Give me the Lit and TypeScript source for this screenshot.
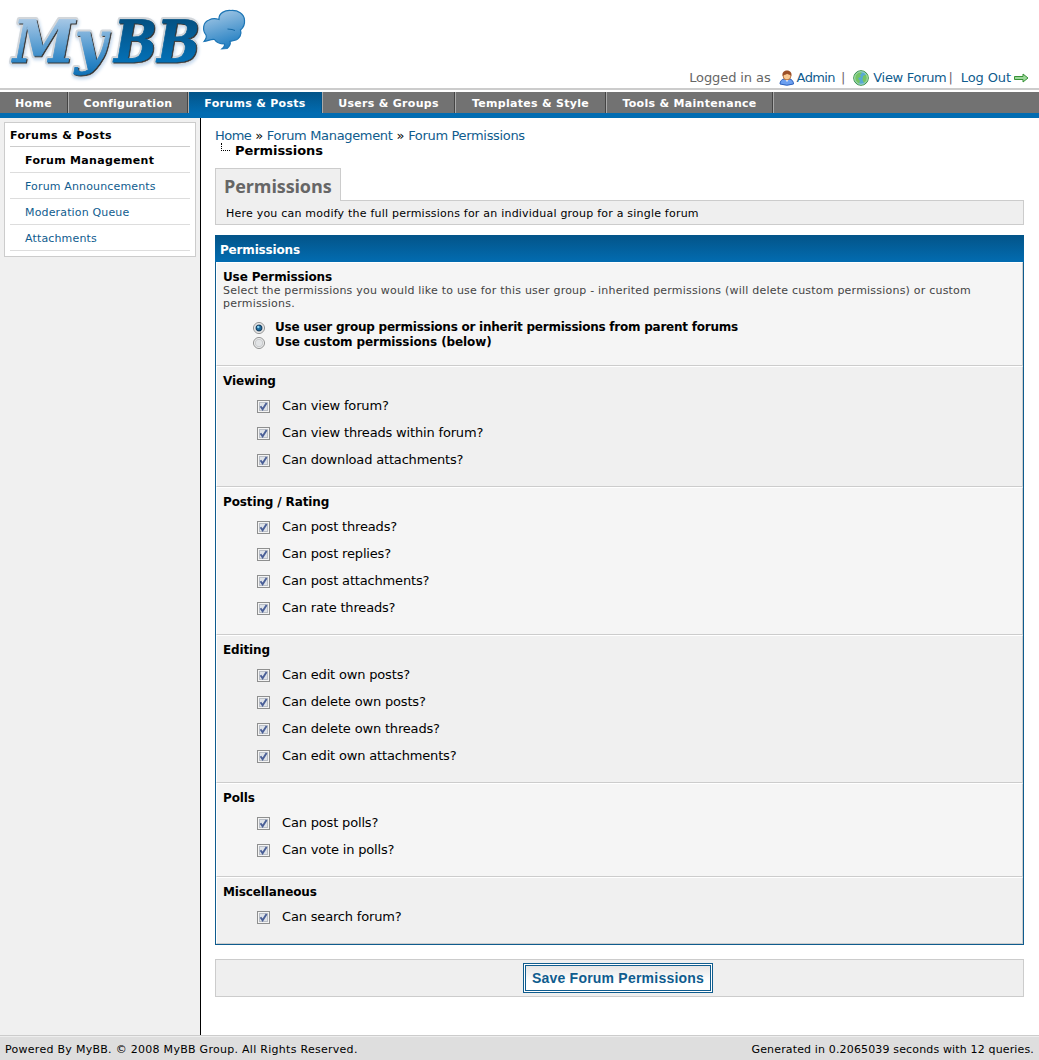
import { LitElement, html, svg, css } from "lit";
import { customElement } from "lit/decorators.js";

const TABS = [
  { label: "Home", width: 68 },
  { label: "Configuration", width: 120 },
  { label: "Forums & Posts", width: 134, active: true },
  { label: "Users & Groups", width: 133 },
  { label: "Templates & Style", width: 151 },
  { label: "Tools & Maintenance", width: 167 },
];

const SIDE = ["Forum Management", "Forum Announcements", "Moderation Queue", "Attachments"];

const GROUPS = [
  { title: "Viewing", items: ["Can view forum?", "Can view threads within forum?", "Can download attachments?"] },
  { title: "Posting / Rating", items: ["Can post threads?", "Can post replies?", "Can post attachments?", "Can rate threads?"] },
  { title: "Editing", items: ["Can edit own posts?", "Can delete own posts?", "Can delete own threads?", "Can edit own attachments?"] },
  { title: "Polls", items: ["Can post polls?", "Can vote in polls?"] },
  { title: "Miscellaneous", items: ["Can search forum?"] },
];

const layer = (cls: string) => svg`
  <g class=${cls}>
    <text x="13" y="62" font-size="58" textLength="94" lengthAdjust="spacingAndGlyphs" class="my">My</text>
    <text x="114" y="62" font-size="58" textLength="86" lengthAdjust="spacingAndGlyphs" class="bb">BB</text>
  </g>`;

const logo = html`
  <svg class="logo" width="260" height="84" viewBox="0 0 260 84" role="img" aria-label="MyBB">
    <defs>
      <linearGradient id="my" gradientUnits="userSpaceOnUse" x1="0" y1="18" x2="0" y2="76">
        <stop offset="0" stop-color="#a9c9e6" /><stop offset=".75" stop-color="#2f86c6" /><stop offset="1" stop-color="#0d70b6" />
      </linearGradient>
      <linearGradient id="bb" gradientUnits="userSpaceOnUse" x1="0" y1="18" x2="0" y2="62">
        <stop offset="0" stop-color="#045081" /><stop offset="1" stop-color="#0470b6" />
      </linearGradient>
      <linearGradient id="bub" gradientUnits="userSpaceOnUse" x1="218" y1="9" x2="230" y2="48">
        <stop offset="0" stop-color="#a6c9e6" /><stop offset="1" stop-color="#1c7bc0" />
      </linearGradient>
    </defs>
    ${layer("halo")} ${layer("shade")} ${layer("face")}
    <path class="bubble" d="M219 19.500C218.500 13 225 10 231 10.500C238 10 244 14 244.500 20C245 25 243 28 240.500 30C242 34 240 39 234 40.500L230 41.500C231 44 230 46 227 48.500L222 48.800C224 47 225 45.500 224.500 44C219 44 216 42 214.500 39.500C211 39 208 41 204 41.500C206 39 207 37 206 35C202 30 203 22 209 20C212 18.500 216 18.500 219 19.500Z" />
    <path class="mark" d="M227.500 29L232 29.500L235 30.500" />
  </svg>`;

const userIcon = html`
  <svg width="16" height="16" viewBox="0 0 16 16">
    <path d="M1 14C1 11 3 9 5.500 9h4.500c3 0 4.500 2.500 4.500 5Q8 16.500 1 14Z" fill="#6b9ff0" stroke="#2d61bd" />
    <path d="M6 9l2 3 2-3z" fill="#fff" />
    <circle cx="8" cy="6" r="3.900" fill="#fac993" stroke="#a65a25" stroke-width=".8" />
    <path d="M3.500 6C3 2 5.500.6 8 .6s5 1.400 4.500 5.400C11.500 4.500 9 4.800 8 3.800 7 5 5 4.500 3.500 6Z" fill="#9c4f27" />
  </svg>`;

const worldIcon = html`
  <svg width="16" height="16" viewBox="0 0 16 16">
    <circle cx="8" cy="8" r="7.300" fill="#58a9d4" stroke="#3d9440" />
    <path d="M2 5Q4 2 7 1.500L9 3 7 5 8 7 5 8 7 11 6 14Q1.500 12 1.400 8ZM10 6l4-2Q16 8 13.500 12L11 13 9.500 10Z" fill="#74c565" />
    <circle cx="8" cy="8" r="6.300" fill="none" stroke="#bde5c0" stroke-width=".8" />
  </svg>`;

const arrowIcon = html`
  <svg class="arrow" width="15" height="10" viewBox="0 0 15 10">
    <path d="M.5 3.500h8.500V1l5 4-5 4V6.500H.5Z" fill="#9dd79a" stroke="#379237" />
  </svg>`;

const check = html`
  <svg class="check" width="13" height="13" viewBox="0 0 13 13" role="img" aria-label="checked">
    <rect x=".5" y=".5" width="12" height="12" fill="#f4f4f4" stroke="#8e8f8f" />
    <rect x="2.500" y="2.500" width="8" height="8" fill="#dfe3e8" stroke="#b9bec6" />
    <path d="M3.500 6.300L5.600 9.300 9.600 3" fill="none" stroke="#4a5f97" stroke-width="1.900" />
  </svg>`;

const radio = (on: boolean) => html`
  <svg class="radio" width="12" height="12" viewBox="0 0 12 12" role="img" aria-label=${on ? "selected" : "not selected"}>
    <circle cx="6" cy="6" r="5.500" fill="#f6f6f6" stroke="#8e8f8f" />
    <circle cx="6" cy="6" r="3.800" fill="#e2e4e6" stroke="#c6c8ca" />
    ${on ? svg`<circle cx="6" cy="6" r="2.900" fill="#1d6a9c" stroke="#123a5c" /><circle cx="5.300" cy="5" r="1.200" fill="#8bd4f4" />` : ""}
  </svg>`;

@customElement("app-root")
export class AppRoot extends LitElement {
  static styles = css`
    :host { display: flex; flex-direction: column; height: 1060px; overflow: hidden; background: #fff; color: #000;
      font-family: Verdana, "DejaVu Sans", sans-serif; font-size: 13px; line-height: 15px; white-space: nowrap; }
    * { box-sizing: border-box; }
    svg { display: block; flex: none; }
    a { color: #0f5c8e; text-decoration: none; }
    .header { height: 90px; flex: none; display: flex; justify-content: space-between; align-items: flex-start; border-bottom: 2px solid #ccc; }
    .logo text { font-family: "DejaVu Serif", serif; font-weight: bold; font-style: italic; }
    .halo { fill: #d2d6da; stroke: #d2d6da; stroke-width: 5; stroke-linejoin: round; filter: drop-shadow(1px 2px 1.500px #c9dcf0); }
    .shade { fill: #333; stroke: #333; stroke-width: 0.8; transform: translate(1px, 1px); }
    .face { stroke-width: 0.8; }
    .face .my { fill: url(#my); stroke: url(#my); }
    .face .bb { fill: url(#bb); stroke: url(#bb); }
    .bubble { fill: url(#bub); stroke: #1c75b5; stroke-width: 1.200; }
    .mark { fill: none; stroke: #1469a6; }
    .welcome { display: flex; align-items: center; color: #666; padding: 69px 10px 0 0; height: 86px; letter-spacing: -0.1px; }
    .who { margin-right: 8px; }
    .user { margin-right: 2px; }
    .world { margin-right: 4px; }
    .w-admin { letter-spacing: -0.6px; margin-right: 6px; }
    .w-view { letter-spacing: -0.3px; margin-right: 2px; }
    .w-out { margin-right: 3px; }
    .bar { margin-right: 8px; color: #72656f; }
    .menu { height: 26px; flex: none; margin-top: 2px; display: flex; background: #727272; border-bottom: 5px solid #026cb1; }
    .tab { display: flex; align-items: center; justify-content: center; color: #fff; font-size: 11px; font-weight: bold; height: 21px;
      border-left: 1px solid #aaa; border-right: 1px solid #444; letter-spacing: 0.3px; padding-top: 1px; }
    .tab:first-child { border-left: 0; }
    .tab.active { background: linear-gradient(#035488, #026cb1); border-right-color: #035488; }
    .tab.last-edge { width: 1px; padding: 0; border-right: 0; }
    .body { display: flex; flex: 1; min-height: 0; }
    .side { width: 201px; background: #f0f0f0; border-right: 1px solid #000; padding: 4px; flex: none; font-size: 11px; }
    .box { width: 192px; height: 135px; border: 1px solid #ccc; background: #fff; padding: 0 5px; }
    .box-title { font-weight: bold; height: 24px; line-height: 25px; border-bottom: 1px solid #ccc; letter-spacing: 0.35px; }
    .side-item { display: block; height: 26px; line-height: 28px; border-bottom: 1px solid #ddd; padding-left: 15px; letter-spacing: 0.15px; }
    .side-item.on { color: #000; font-weight: bold; letter-spacing: 0.32px; }
    .main { flex: 1; min-width: 0; padding: 10px 15px 0 14px; }
    .crumb { display: flex; gap: 4px; letter-spacing: -0.33px; }
    .crumb a:first-child { letter-spacing: -0.55px; }
    .crumb-now { display: flex; font-weight: bold; letter-spacing: -0.07px; }
    .elbow { width: 9px; height: 8px; margin: 0 5px 0 6px; border-left: 1px dotted #000; border-bottom: 1px dotted #000; }
    .intro { margin-top: 10px; height: 57px; display: flex; flex-direction: column; }
    .intro-tab { width: 126px; height: 33px; border: 1px solid #ccc; border-bottom: 0; background: #efefef; color: #666;
      font: bold 18px/34px "Open Sans", sans-serif; padding-left: 8px; letter-spacing: -0.1px; margin-bottom: -1px; z-index: 1; }
    .intro-text { border: 1px solid #ccc; background: #efefef; height: 25px; line-height: 25px; font-size: 11px; padding-left: 10px; letter-spacing: 0.215px; }
    .table { margin-top: 10px; border: 1px solid #0f5c8e; border-top: 0; }
    .thead { height: 27px; margin: 0 -1px; line-height: 30px; padding-left: 5px; color: #fff; font-weight: bold; font-size: 12px; letter-spacing: -0.17px;
      background: linear-gradient(#035488, #026cb1); }
    .row { border: 1px solid; border-color: #fff #ccc #ccc #fff; background: #f5f5f5; padding: 7px 6px 11px 6px; }
    .row.alt { background: #f0f0f0; }
    .first { height: 104px; }
    .label { font-weight: bold; font-size: 12px; line-height: 14px; letter-spacing: -0.13px; }
    .desc { font-size: 11px; line-height: 13px; color: #444; white-space: normal; letter-spacing: 0.215px; }
    .radios { padding: 10px 0 0 30px; font-weight: bold; font-size: 12px; letter-spacing: -0.24px; }
    .radio-line { display: flex; align-items: center; gap: 10px; }
    .radio-line + .radio-line { letter-spacing: -0.1px; }
    .radio { margin: 0; }
    .items { padding: 4px 0 2px 34px; letter-spacing: -0.17px; }
    .item { height: 27px; display: flex; align-items: center; gap: 12px; }
    .check { margin-top: 1px; }
    .buttons { margin-top: 14px; height: 38px; border: 1px solid #ccc; background: #efefef; display: flex; align-items: center; justify-content: center; padding-right: 3px; }
    .save { width: 190px; height: 30px; border: 3px double #0f5c8e; background: linear-gradient(#e6e6e6, #fff 65%) padding-box, #fff; color: #0f5c8e;
      font: bold 14px/24px "Liberation Sans", sans-serif; padding: 0; letter-spacing: 0.22px; }
    .footer { height: 25px; flex: none; background: #dedede; border-top: 1px solid #ccc; box-shadow: inset 0 1px #eee; display: flex; justify-content: space-between;
      padding: 0 5px; font-size: 11px; line-height: 27px; }
    .powered { letter-spacing: 0.28px; }
    .generated { letter-spacing: 0.15px; }
  `;

  render() {
    return html`
      <div class="header">
        ${logo}
        <div class="welcome">
          <span class="who">Logged in as</span>
          <span class="user">${userIcon}</span><a class="w-admin">Admin</a><span class="bar">|</span>
          <span class="world">${worldIcon}</span><a class="w-view">View Forum</a><span class="bar">|</span>
          <a class="w-out">Log Out</a>${arrowIcon}
        </div>
      </div>
      <div class="menu">
        ${TABS.map((t) => html`<div class="tab ${t.active ? "active" : ""}" style="width:${t.width}px">${t.label}</div>`)}
        <div class="tab last-edge"></div>
      </div>
      <div class="body">
        <div class="side">
          <div class="box">
            <div class="box-title">Forums &amp; Posts</div>
            ${SIDE.map((s, i) => html`<a class="side-item ${i === 0 ? "on" : ""}">${s}</a>`)}
          </div>
        </div>
        <div class="main">
          <div class="crumb"><a>Home</a>»<a>Forum Management</a>»<a>Forum Permissions</a></div>
          <div class="crumb-now"><span class="elbow"></span>Permissions</div>
          <div class="intro">
            <div class="intro-tab">Permissions</div>
            <div class="intro-text">Here you can modify the full permissions for an individual group for a single forum</div>
          </div>
          <div class="table">
            <div class="thead">Permissions</div>
            <div class="row first">
              <div class="label">Use Permissions</div>
              <div class="desc">Select the permissions you would like to use for this user group - inherited permissions (will delete custom permissions) or custom permissions.</div>
              <div class="radios">
                <div class="radio-line">${radio(true)}<span>Use user group permissions or inherit permissions from parent forums</span></div>
                <div class="radio-line">${radio(false)}<span>Use custom permissions (below)</span></div>
              </div>
            </div>
            ${GROUPS.map((g, i) => html`
              <div class="row ${i % 2 === 0 ? "alt" : ""}">
                <div class="label">${g.title}</div>
                <div class="items">${g.items.map((t) => html`<div class="item">${check}<span>${t}</span></div>`)}</div>
              </div>`)}
          </div>
          <div class="buttons"><button class="save">Save Forum Permissions</button></div>
        </div>
      </div>
      <div class="footer"><span class="powered">Powered By MyBB. © 2008 MyBB Group. All Rights Reserved.</span><span class="generated">Generated in 0.2065039 seconds with 12 queries.</span></div>
    `;
  }
}
